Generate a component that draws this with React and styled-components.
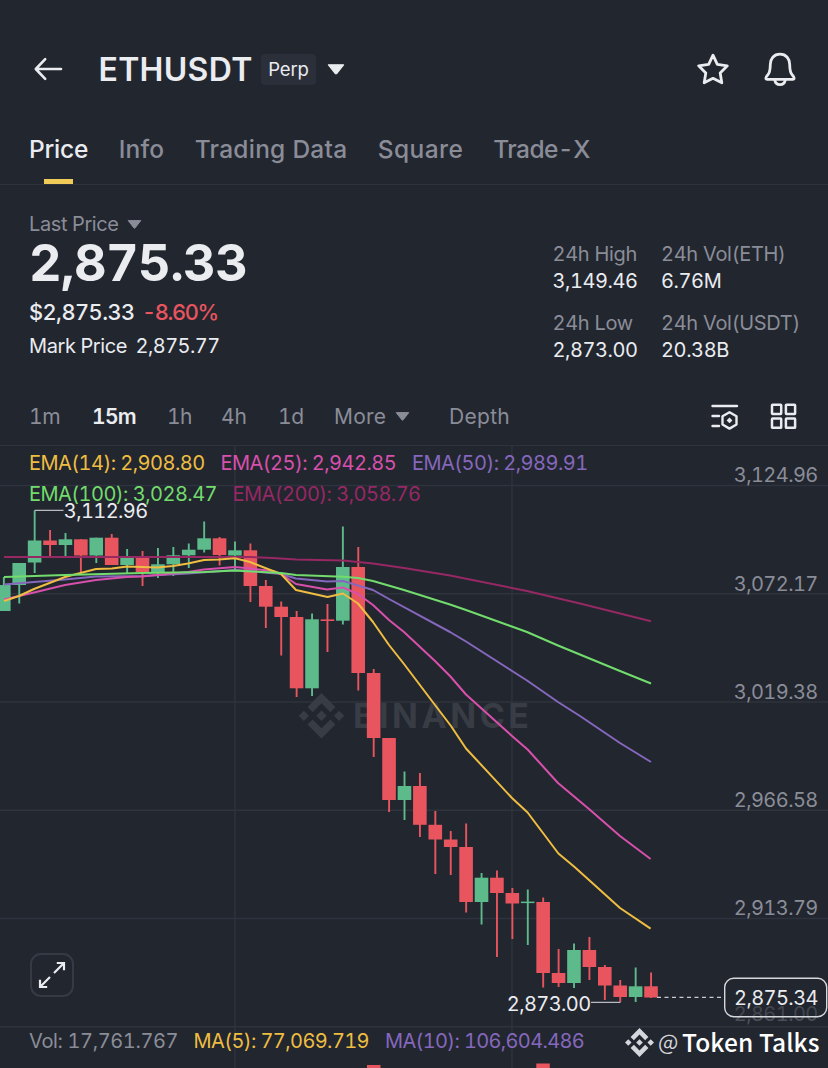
import React from "react";
import styled, { createGlobalStyle } from "styled-components";

const c = {
  bg: "#22262f",
  line: "#2f333d",
  text: "#eaecf0",
  muted: "#8a8d98",
  red: "#e8555f",
  green: "#5dbb8b",
  yellow: "#eebd41",
  pink: "#d750ac",
  purple: "#8568bd",
  lime: "#72dc6c",
  plum: "#962864",
};

const Global = createGlobalStyle`
  * { box-sizing: border-box; }
  body {
    margin: 0;
    background: ${c.bg};
    color: ${c.text};
    font-family: Inter, "Open Sans", sans-serif;
    font-variant-numeric: tabular-nums;
    overflow: hidden;
  }
  svg { display: block; }
`;

const Screen = styled.main`
  width: 828px;
  height: 1068px;
  display: flex;
  flex-direction: column;
  overflow: hidden;
`;

const Header = styled.header`
  height: 114px;
  padding: 24px 32px 0 33px;
  display: flex;
  align-items: center;
`;

const Pair = styled.h1`
  margin: 0 0 0 34.500px;
  padding-top: 2px;
  width: 162.500px;
  font-size: 32px;
  line-height: 40px;
  font-weight: 600;
  letter-spacing: 0.300px;
  white-space: nowrap;
`;

const Badge = styled.span`
  width: 55px;
  height: 31px;
  border-radius: 4px;
  background: #2b2f3a;
  font-size: 18.5px;
  line-height: 31px;
  text-align: center;
  letter-spacing: -0.2px;
  margin-right: 11px;
`;

const HeaderActions = styled.div`
  margin-left: auto;
  display: flex;
  align-items: center;
  gap: 35px;
`;

const Tabs = styled.nav`
  height: 71px;
  padding: 20px 29px 0;
  display: flex;
  gap: 31px;
  border-bottom: 1px solid ${c.line};
`;

const Tab = styled.div`
  width: ${(p) => p.$w}px;
  height: 50px;
  display: flex;
  flex-direction: column;
  justify-content: space-between;
  align-items: center;
  font-size: 24.5px;
  line-height: 30px;
  font-weight: 500;
  letter-spacing: ${(p) => p.$track || 0}px;
  white-space: nowrap;
  color: ${(p) => (p.$active ? c.text : c.muted)};
`;

const Underline = styled.i`
  width: 29px;
  height: 5px;
  background: #f0cb57;
`;

const Summary = styled.section`
  height: 203px;
  display: flex;
  padding-left: 29px;
`;

const Quote = styled.div`
  width: 523.500px;
  padding-top: 29px;
`;

const Line = styled.div`
  height: ${(p) => p.$h}px;
  display: flex;
  align-items: center;
  gap: ${(p) => p.$gap || 9}px;
  white-space: nowrap;
`;

const Label = styled.span`
  font-size: 20px;
  letter-spacing: ${(p) => p.$track ?? -0.400}px;
  color: ${(p) => p.$color || c.muted};
`;

const BigPrice = styled.span`
  font-size: 50.5px;
  font-weight: 650;
  letter-spacing: -0.600px;
`;

const SubPrice = styled.span`
  font-size: 21.8px;
  font-weight: 500;
  letter-spacing: ${(p) => p.$track || 0}px;
  color: ${(p) => p.$color || c.text};
`;

const Stats = styled.div`
  padding-top: 55.500px;
  display: grid;
  grid-template-columns: 108.500px 140px;
  grid-auto-rows: 54px;
  row-gap: 15px;
`;

const Stat = styled.div`
  display: flex;
  flex-direction: column;
  line-height: 27px;
  white-space: nowrap;
`;

const Toolbar = styled.div`
  height: 57px;
  padding: 0 31px 0 29px;
  display: flex;
  align-items: center;
`;

const Frame = styled.span`
  width: ${(p) => p.$w}px;
  font-size: 21px;
  letter-spacing: ${(p) => p.$track || 0}px;
  font-weight: ${(p) => (p.$active ? 600 : 400)};
  color: ${(p) => (p.$active ? c.text : c.muted)};
  display: flex;
  align-items: center;
  gap: 9px;
`;

const Tools = styled.div`
  margin-left: auto;
  display: flex;
  align-items: center;
  gap: 31px;
`;

const Chart = styled.section`
  position: relative;
  height: 623px;
`;

const Legend = styled.div`
  position: absolute;
  top: ${(p) => p.$top}px;
  left: 29px;
  display: flex;
  flex-direction: column;
`;

const LegendRow = styled.div`
  display: flex;
  height: 31px;
  align-items: center;
`;

const LegendItem = styled.span`
  width: ${(p) => p.$w}px;
  margin-right: 15.500px;
  white-space: nowrap;
  font-size: 20px;
  letter-spacing: ${(p) => p.$track ?? -0.540}px;
  color: ${(p) => p.$color};
`;

const Expand = styled.button`
  position: absolute;
  left: 30px;
  top: 508px;
  width: 44px;
  height: 44px;
  padding: 0;
  display: grid;
  place-items: center;
  border: 2px solid #363a45;
  border-radius: 11px;
  background: transparent;
`;

const Author = styled.div`
  position: absolute;
  left: 625px;
  top: 582px;
  height: 30px;
  display: flex;
  align-items: center;
  white-space: nowrap;
  font-family: "Noto Sans CJK SC", sans-serif;
  font-weight: 500;
  font-size: 24.5px;
  line-height: 28px;
  letter-spacing: 0.100px;
  color: #fff;
`;

const At = styled.span`
  margin-left: 4px;
  padding-bottom: 3px;
  width: 24px;
  font-size: 21.500px;
  font-weight: 400;
  color: #d5d6da;
`;

const Caret = ({ size = 15, h = 9, color = c.muted }) => (
  <svg width={size} height={h} viewBox="0 0 15 9">
    <path d="M1.2.6h12.6L8.2 7.8q-.7.8-1.4 0Z" fill={color} stroke={color} strokeWidth="1" strokeLinejoin="round" />
  </svg>
);

const BackIcon = () => (
  <svg width="31" height="24" viewBox="0 0 31 24" fill="none" stroke={c.text} strokeWidth="2.6" strokeLinecap="round" strokeLinejoin="round">
    <path d="M28 12H3M12.2 2.2 2.8 12l9.4 9.8" />
  </svg>
);

const StarIcon = () => (
  <svg width="32" height="32" viewBox="0 0 32 32" fill="none" stroke={c.text} strokeWidth="2.800" strokeLinejoin="round">
    <path d="m16 2.2 4.3 9.2 10 1.4-7.100 7.2 1.600 9.800-8.800-4.500-8.800 4.500 1.600-9.800-7.100-7.200 10-1.400Z" />
  </svg>
);

const BellIcon = () => (
  <svg width="32" height="35" viewBox="1 0 32 35" fill="none" stroke={c.text} strokeWidth="2.800" strokeLinejoin="round">
    <path d="M17 2.200C10.800 2.200 7.300 6.800 7.300 12.500c0 6.200-.6 8.500-2.800 10.800-1.100 1.200-1.600 1.800-1.600 2.800 0 .8.5 1.200 1.300 1.200h25.600c.8 0 1.300-.4 1.300-1.200 0-1-.5-1.600-1.600-2.800-2.200-2.300-2.800-4.600-2.800-10.800C26.700 6.800 23.200 2.200 17 2.200Z" />
    <path d="M11.700 27.700c.5 3.200 2.500 4.900 5.300 4.900s4.800-1.700 5.300-4.900" />
  </svg>
);

const IndicatorIcon = () => (
  <svg width="28" height="26" viewBox="0 0 28 26" fill="none" stroke={c.text} strokeWidth="2.400">
    <path d="M1.500 2h24.500M1.500 12h6.500M1.500 22h6.500" strokeLinecap="round" />
    <path d="m18.500 8.200 7 4.100v8.200l-7 4.100-7-4.100v-8.200Z" strokeLinejoin="round" />
    <path d="m18.500 13.500 2.900 2.900-2.900 2.900-2.900-2.900Z" fill={c.text} stroke="none" />
  </svg>
);

const GridIcon = () => (
  <svg width="27" height="27" viewBox="0 0 27 27" fill="none" stroke={c.text} strokeWidth="2.500">
    {[2, 15.900].map((x) =>
      [1.700, 15.600].map((y) => <rect key={`${x}-${y}`} x={x} y={y} width="9.200" height="9.200" rx="0.600" />)
    )}
  </svg>
);

const ExpandIcon = () => (
  <svg width="28" height="28" viewBox="0 0 28 28" fill="none" stroke={c.text} strokeWidth="2.200">
    <path d="M16 12 26 2M18.800 2H26v7.200M12 16 2 26M9.200 26H2v-7.200" />
  </svg>
);

const DiamondMark = () => (
  <>
    <path d="M38.700 53.200 63.300 28.600l24.600 24.600 14.300-14.300L63.300 0 24.400 38.900Z" />
    <path d="M0 63.300 14.300 49l14.300 14.300-14.300 14.300ZM98 63.300 112.300 49l14.300 14.300-14.300 14.300ZM77.800 63.300 63.300 48.800 48.800 63.300l14.500 14.500Z" />
    <path d="M38.700 73.400 63.300 98l24.600-24.600 14.300 14.300-38.900 38.900-38.900-38.900Z" />
  </>
);

const X0 = 3.800;
const STEP = 15.410;

// [rising, body top, body bottom, wick top, wick bottom]
const candles = [
  [1, 585, 611, 577, 611], [1, 563, 585, 563, 603.5], [1, 540.500, 562.500, 510.500, 573],
  [0, 540.500, 545, 530, 556], [1, 539.300, 545, 533, 556], [0, 539.300, 555.500, 539.300, 572],
  [1, 537.700, 555.500, 537.700, 563], [0, 537.700, 565, 534, 565], [1, 557.300, 565, 549, 573],
  [0, 557.300, 572, 551, 586], [1, 564.300, 572, 548, 578], [1, 555.300, 564.300, 547, 576],
  [1, 549.700, 555.300, 543.500, 568], [1, 538.300, 549.700, 521.500, 552.500], [0, 538.300, 555, 537, 565.500],
  [1, 550.300, 555.500, 541.500, 570], [0, 550.300, 586, 543.500, 602], [0, 586, 606.700, 580, 628],
  [0, 606.700, 617, 601.500, 655.500], [0, 617, 688.300, 611, 697], [1, 619.300, 688.300, 613.500, 696],
  [0, 619.400, 621, 604, 652], [1, 567, 620.700, 526.500, 624.500], [0, 567, 673, 547, 690.500],
  [0, 673, 738, 669, 757], [0, 738, 800, 738, 812], [1, 786, 800, 771.500, 820],
  [0, 786, 824.800, 773, 837], [0, 824.800, 839.500, 811, 874], [0, 839.500, 847, 831, 875],
  [0, 847, 902, 823.500, 912.500], [1, 877.700, 902, 873, 924.500], [0, 877.700, 893, 870.500, 957],
  [0, 893, 903.500, 888, 939], [1, 901.600, 903.100, 889.500, 945], [0, 902, 973, 897.500, 987.500],
  [0, 973, 983, 949, 987], [1, 950, 983, 943.500, 988], [0, 950, 967, 937, 980],
  [0, 967, 985.500, 965, 1000], [0, 985.500, 997, 980, 1002], [1, 986.300, 997, 967.500, 1002],
  [0, 986.300, 997.500, 972.500, 998],
];

const averages = [
  [c.plum, "4,557 204,557 250,557 273,558 296,559.5 343,560.5 373,563.5 404,568 450,575.5 527,591 580,603.5 651,621.3"],
  [c.purple, "4,584.5 34,582 65,579.5 96,576.5 142,576 188,573.5 235,570 250,571 281,574 296,578.5 327,581.5 343,581 373,590 389,599 450,632 466,641.5 527,680.5 558,702 580,716 620,743 651,762"],
  [c.pink, "4,599.5 19,596 34,592.5 65,585 96,580 127,577 142,576.500 188,572 204,569.500 235,567 250,568.500 273,571 281,574 296,584 327,589.500 343,587.500 358,594 373,605 389,620 404,632 435,661 450,676 466,694.500 512,736 527.600,749.500 558,783 589,809 620,836 650.600,859"],
  [c.yellow, "4,601 19,596 34,589 65,577 96,569 112,568.500 127,566.500 157,567.500 173,566 188,563.500 204,560 219,559.500 235,558.300 250,562 273,571 281,574 296,590 327.500,597 343,593.500 358,603.500 373,622 389,645 404,664 435,705 451,726 466,748.500 512,798 527.600,812.500 543,833 558.400,853.500 574,866.500 589,880 620,908 650.600,928.700"],
  [c.lime, "4,577 65,575 142,573 204,572 235,570.500 281,573 296,575 343,576.700 358,578 373,581 404,590 450,604.500 466,610 527,632 558,645.500 620,671 651,683.500"],
];

const gridRows = [485.500, 593.800, 702, 810.300, 918.500, 1026.700];
const priceTicks = ["3,124.96", "3,072.17", "3,019.38", "2,966.58", "2,913.79"];

const emaRows = [
  [["EMA(14): 2,908.80", c.yellow, 176], ["EMA(25): 2,942.85", c.pink, 176], ["EMA(50): 2,989.91", c.purple, 176]],
  [["EMA(100): 3,028.47", c.lime, 188], ["EMA(200): 3,058.76", c.plum, 188]],
];

const Plot = () => (
  <svg width="828" height="623" viewBox="0 445 828 623" fontFamily="Inter, sans-serif" fontSize="20">
    <g stroke={c.line} strokeWidth="1.400">
      <path d="M0 445.300H828" />
      {gridRows.map((y) => <path key={y} d={`M0 ${y}H828`} />)}
      <path d="M235 445V1068M512 445V1068" />
    </g>
    <g fill="#383c44">
      <g transform="translate(298.700 693) scale(.36)"><DiamondMark /></g>
      <text x="353" y="728.200" fontSize="34" fontWeight="750" textLength="176">BINANCE</text>
    </g>
    {candles.map(([up, top, bottom, high, low], i) => {
      const x = X0 + STEP * i;
      return (
        <g key={i} fill={up ? c.green : c.red}>
          <rect x={x - 0.900} y={high} width="1.900" height={low - high} />
          <rect x={x - 6.800} y={top} width="13.600" height={bottom - top} />
        </g>
      );
    })}
    {averages.map(([color, points]) => (
      <polyline key={color} points={points} fill="none" stroke={color} strokeWidth="2" strokeLinejoin="round" />
    ))}
    <path d="M34.600 510.300H63.500M591 1002.300H620.500" stroke="#b9bbc1" strokeWidth="1.300" />
    <text x="63.800" y="518" fill={c.text} textLength="84.300">3,112.96</text>
    <text x="506.800" y="1010.500" fill={c.text} textLength="84.300">2,873.00</text>
    <g fill={c.muted}>
      {priceTicks.map((t, i) => <text key={t} x="733.800" y={482.200 + 108.300 * i} textLength="84.500">{t}</text>)}
    </g>
    <text x="733.800" y="1020.800" fill="#4d5058" textLength="84.500">2,861.00</text>
    <path d="M657 997.300H723" stroke="#c9cbd0" strokeWidth="1.200" strokeDasharray="4 3.500" />
    <rect x="724.700" y="978.300" width="102" height="38.400" rx="9" fill={c.bg} fillOpacity=".25" stroke="#d6d8dc" strokeWidth="1.400" />
    <text x="734" y="1005.400" fill={c.text} textLength="84.500">2,875.34</text>
    <g fill={c.red}>
      <rect x="367" y="1065" width="13.500" height="3" />
      <rect x="536.300" y="1063.500" width="13.500" height="5" />
    </g>
  </svg>
);

export default function App() {
  return (
    <Screen>
      <Global />
      <Header>
        <BackIcon />
        <Pair>ETHUSDT</Pair>
        <Badge>Perp</Badge>
        <Caret size={18} h={11} color={c.text} />
        <HeaderActions>
          <StarIcon />
          <BellIcon />
        </HeaderActions>
      </Header>
      <Tabs>
        <Tab $w={59} $track={-0.200} $active>Price<Underline /></Tab>
        <Tab $w={45} $track={0.200}>Info</Tab>
        <Tab $w={152} $track={0.250}>Trading Data</Tab>
        <Tab $w={85} $track={0.450}>Square</Tab>
        <Tab $w={95} $track={-0.550}>Trade-X</Tab>
      </Tabs>
      <Summary>
        <Quote>
          <Line $h={20} $gap={8}><Label>Last Price</Label><Caret /></Line>
          <Line $h={56}><BigPrice>2,875.33</BigPrice></Line>
          <Line $h={44} $gap={7.500}>
            <SubPrice $track={-0.550}>$2,875.33</SubPrice>
            <SubPrice $track={-1.400} $color={c.red}>-8.60%</SubPrice>
          </Line>
          <Line $h={23} $gap={8.500}>
            <Label $color={c.text}>Mark Price</Label>
            <Label $track={-0.550} $color={c.text}>2,875.77</Label>
          </Line>
        </Quote>
        <Stats>
          <Stat><Label $track={-0.300}>24h High</Label><Label $track={-0.450} $color={c.text}>3,149.46</Label></Stat>
          <Stat><Label $track={-0.300}>24h Vol(ETH)</Label><Label $color={c.text}>6.76M</Label></Stat>
          <Stat><Label $track={-0.300}>24h Low</Label><Label $track={-0.450} $color={c.text}>2,873.00</Label></Stat>
          <Stat><Label $track={-0.300}>24h Vol(USDT)</Label><Label $color={c.text}>20.38B</Label></Stat>
        </Stats>
      </Summary>
      <Toolbar>
        <Frame $w={63} $track={-0.400}>1m</Frame>
        <Frame $w={75} $track={-0.700} $active>15m</Frame>
        <Frame $w={54} $track={-0.600}>1h</Frame>
        <Frame $w={57}>4h</Frame>
        <Frame $w={56} $track={-0.400}>1d</Frame>
        <Frame $w={115} $track={0.200}>More<Caret /></Frame>
        <Frame $w={62} $track={0.300}>Depth</Frame>
        <Tools><IndicatorIcon /><GridIcon /></Tools>
      </Toolbar>
      <Chart>
        <Plot />
        <Legend $top={2.500}>
          {emaRows.map((row, i) => (
            <LegendRow key={i}>
              {row.map(([t, color, w]) => <LegendItem key={t} $color={color} $w={w}>{t}</LegendItem>)}
            </LegendRow>
          ))}
        </Legend>
        <Legend $top={580.500}>
          <LegendRow>
            <LegendItem $color={c.muted} $w={149} $track={-0.380}>Vol: 17,761.767</LegendItem>
            <LegendItem $color={c.yellow} $w={176} $track={-0.600}>MA(5): 77,069.719</LegendItem>
            <LegendItem $color={c.purple} $w={199} $track={-0.660}>MA(10): 106,604.486</LegendItem>
          </LegendRow>
        </Legend>
        <Expand aria-label="Expand chart"><ExpandIcon /></Expand>
        <Author>
          <svg width="29" height="29" viewBox="0 0 126.600 126.600" fill="#d5d6da"><DiamondMark /></svg>
          <At>@</At>
          <span>Token Talks</span>
        </Author>
      </Chart>
    </Screen>
  );
}
